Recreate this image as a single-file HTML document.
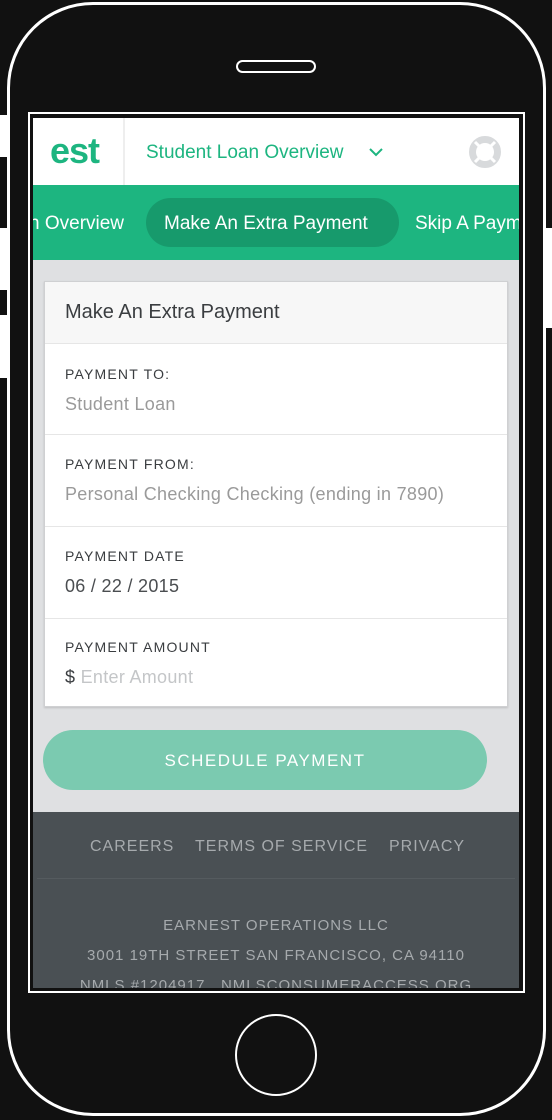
<!DOCTYPE html>
<html><head><meta charset="utf-8"><style>
*{margin:0;padding:0;box-sizing:border-box}
body{width:552px;height:1120px;background:#111;position:relative;overflow:hidden;font-family:"Liberation Sans",sans-serif}
.abs{position:absolute}
.phone{left:7px;top:2px;width:539px;height:1114px;border:3px solid #fff;border-radius:86px}
.screenb{left:28px;top:112px;width:497px;height:881px;border:2px solid #fff;background:#111}
.content{left:33px;top:118px;width:486px;height:870px;background:#dfe0e2;overflow:hidden}
.hdr{left:0;top:0;width:486px;height:67px;background:#fff}
.nav{left:0;top:67px;width:486px;height:75px;background:#1db580;color:#fff;font-size:19px;white-space:nowrap}
.card{left:11px;top:163px;width:464px;height:426px;background:#fff;border:1px solid #cfd0d2;box-shadow:0 1px 2px rgba(0,0,0,.15)}
.row{position:absolute;left:0;width:462px;border-top:1px solid #e6e6e6}
.lab{position:absolute;left:20px;font-size:14px;letter-spacing:1.2px;color:#3a3d40}
.val{position:absolute;left:20px;font-size:18px;color:#9a9a9a;letter-spacing:.3px}
.foot{left:0;top:694px;width:486px;height:180px;background:#4a5054;color:#a6aaad;text-align:center;letter-spacing:1px}
.fl{position:absolute;top:26px;font-size:16px;white-space:nowrap}
</style></head><body>
<div class="abs" style="left:0;top:115px;width:7px;height:42px;background:#fff"></div>
<div class="abs" style="left:0;top:228px;width:7px;height:62px;background:#fff"></div>
<div class="abs" style="left:0;top:315px;width:7px;height:63px;background:#fff"></div>
<div class="abs" style="left:546px;top:228px;width:6px;height:100px;background:#fff"></div>
<div class="abs phone"></div>
<div class="abs" style="left:236px;top:60px;width:80px;height:13px;border:2px solid #fff;border-radius:7px"></div>
<div class="abs" style="left:235px;top:1014px;width:82px;height:82px;border:2px solid #fff;border-radius:50%"></div>
<div class="abs screenb"></div>
<div class="abs content">
 <div class="abs hdr">
  <div class="abs" style="left:17px;top:12px;font-size:36px;font-weight:bold;color:#1db580;letter-spacing:-1px">est</div>
  <div class="abs" style="left:90px;top:0;width:2px;height:67px;background:#eee"></div>
  <div class="abs" style="left:113px;top:24px;font-size:19px;color:#1db580">Student Loan Overview</div>
  <svg class="abs" style="left:335px;top:29px" width="16" height="10"><path d="M2 2l6 6 6-6" stroke="#1db580" stroke-width="2" fill="none"/></svg>
  <svg class="abs" style="left:434px;top:16px" width="36" height="36"><circle cx="18" cy="18" r="12.5" stroke="#d8dadc" stroke-width="7" fill="none"/><g stroke="#fff" stroke-width="3"><path d="M8 8l5 5M28 8l-5 5M8 28l5-5M28 28l-5-5"/></g></svg>
 </div>
 <div class="abs nav">
  <div class="abs" style="left:-4px;top:28px">n Overview</div>
  <div class="abs" style="left:113px;top:13px;width:253px;height:49px;border-radius:25px;background:#179a6c"></div>
  <div class="abs" style="left:131px;top:28px">Make An Extra Payment</div>
  <div class="abs" style="left:382px;top:28px">Skip A Payment</div>
 </div>
 <div class="abs card">
  <div class="abs" style="left:0;top:0;width:462px;height:61px;background:#f7f7f7"></div>
  <div class="abs" style="left:20px;top:19px;font-size:20px;color:#3a3d40">Make An Extra Payment</div>
  <div class="row" style="top:61px;height:91px"><div class="lab" style="top:22px">PAYMENT TO:</div><div class="val" style="top:50px">Student Loan</div></div>
  <div class="row" style="top:152px;height:92px"><div class="lab" style="top:21px">PAYMENT FROM:</div><div class="val" style="top:49px">Personal Checking Checking (ending in 7890)</div></div>
  <div class="row" style="top:244px;height:92px"><div class="lab" style="top:21px">PAYMENT DATE</div><div class="val" style="top:49px;color:#4a4d50">06 / 22 / 2015</div></div>
  <div class="row" style="top:336px;height:89px"><div class="lab" style="top:20px">PAYMENT AMOUNT</div><div class="val" style="top:48px;color:#c4c6c8"><span style="color:#3a3d40">$</span> Enter Amount</div></div>
 </div>
 <div class="abs" style="left:10px;top:612px;width:444px;height:60px;border-radius:30px;background:#7bcab0;color:#fff;font-size:17px;letter-spacing:1.5px;text-align:center;line-height:62px">SCHEDULE PAYMENT</div>
 <div class="abs foot">
  <div class="fl" style="left:57px">CAREERS</div>
  <div class="fl" style="left:162px">TERMS OF SERVICE</div>
  <div class="fl" style="left:356px">PRIVACY</div>
  <div class="abs" style="left:4px;top:66px;width:478px;height:1px;background:#555b5f"></div>
  <div class="abs" style="left:0;top:105px;width:486px;font-size:15px">EARNEST OPERATIONS LLC</div>
  <div class="abs" style="left:0;top:135px;width:486px;font-size:15px">3001 19TH STREET SAN FRANCISCO, CA 94110</div>
  <div class="abs" style="left:0;top:165px;width:486px;font-size:15px">NMLS #1204917 &nbsp; NMLSCONSUMERACCESS.ORG</div>
 </div>
</div>
</body></html>
